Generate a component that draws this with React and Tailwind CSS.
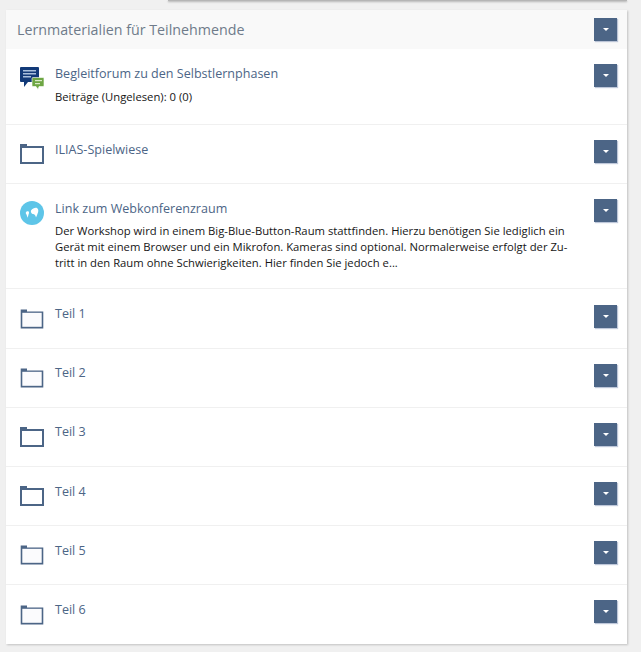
import React from 'react';

const FolderIcon = () => (
  <svg width="24" height="20" viewBox="0 0 24 20" className="block">
    <path d="M0 0h7v2h17v18H0z" fill="#4c6586" />
    <rect x="2" y="4" width="20" height="14" fill="#fff" />
  </svg>
);

// some of the folders are scaled in the original, so their edges come out soft
const SoftFolderIcon = () => (
  <svg width="24" height="20" viewBox="0 0 24 20" className="block">
    <path d="M0.7 0.4h6.3v2h16.3v17H0.7z" fill="#4c6586" />
    <rect x="2.3" y="3.8" width="19.4" height="14" fill="#fbfbfd" />
  </svg>
);

const ForumIcon = () => (
  <svg width="24" height="24" viewBox="0 0 24 24" className="block">
    <path d="M1 0h17a1 1 0 0 1 1 1v14H8l-4 5v-5H1a1 1 0 0 1-1-1V1a1 1 0 0 1 1-1z" fill="#123a78" />
    <rect x="3" y="3" width="13" height="1.5" fill="#a9c0dc" />
    <rect x="3" y="6" width="13" height="1.5" fill="#a9c0dc" />
    <rect x="3" y="9" width="8" height="1.5" fill="#a9c0dc" />
    <path d="M13 10.500h10a1 1 0 0 1 1 1v7a1 1 0 0 1-1 1h-4l-1 3-2-3h-3a1 1 0 0 1-1-1v-7a1 1 0 0 1 1-1z" fill="#6ea644" stroke="#fff" strokeWidth="0.6" />
    <rect x="15" y="13" width="7" height="1.2" fill="#d9eac8" />
    <rect x="15" y="16" width="5" height="1.2" fill="#d9eac8" />
  </svg>
);

const WebIcon = () => (
  <svg width="24" height="24" viewBox="0 0 24 24" className="block">
    <circle cx="12" cy="12" r="12" fill="#5ec5e8" />
    <path d="M11 9.500C12.500 7.500 15 6.500 17 7c1.500 1 1.500 3 1 4.500-.5 1-1 3-2 5-.5-2-1.500-3.500-3-3.500-1.500 0-2.500-2-2-3.500z" fill="#fff" />
    <path d="M5.800 11.500c.7-1.500 2.200-1.500 3-.8.500 1.300 0 2-.3 2.800-.3 1.200-.4 2-.8 3.200-.4-1.300-1-2.200-1.200-3.200-.6-.6-.9-1.300-.7-2z" fill="#fff" />
  </svg>
);

const DropButton = () => (
  <button className="w-[23px] h-[23px] bg-[#4c6586] flex items-center justify-center shadow-[1px_1px_1px_rgba(110,130,170,0.45)] shrink-0">
    <span className="block w-0 h-0 border-x-[3px] border-x-transparent border-t-[3px] border-t-white" />
  </button>
);

const Row = ({ icon, title, children, iconTop, titleTop = 'mt-[1px]', height }) => (
  <div className={`flex items-start border-b border-[#f0f0f0] pl-[14px] pr-[10px] pt-[15px] ${height}`}>
    <div className={`w-[24px] shrink-0 ${iconTop}`}>{icon}</div>
    <div className="ml-[11px] flex-1 min-w-0 pr-[24px]">
      <h4 className={`text-[12.55px] leading-[18px] text-[#4c6586] ${titleTop}`}>{title}</h4>
      {children}
    </div>
    <DropButton />
  </div>
);

const parts = [
  { name: 'Teil 1', soft: true },
  { name: 'Teil 2', soft: true },
  { name: 'Teil 3', soft: false },
  { name: 'Teil 4', soft: false },
  { name: 'Teil 5', soft: true },
  { name: 'Teil 6', soft: true },
];

export default function App() {
  return (
    <div className="min-h-[652px] bg-[#f0f0f0] pt-[10px] pl-[6px] pr-[14px] font-['Open_Sans',sans-serif] relative overflow-hidden">
      <div className="absolute top-0 left-[168px] right-[14px] h-[1px] bg-[#b5b5b5] shadow-[0_1px_2px_rgba(0,0,0,0.35)]" />
      <div className="bg-white shadow-[1px_1px_2px_rgba(0,0,0,0.2)]">
        <div className="h-[39px] bg-[#f9f9f9] flex items-center justify-between pl-[11px] pr-[10px]">
          <h3 className="text-[14.25px] text-[#6f7b8a]">Lernmaterialien für Teilnehmende</h3>
          <DropButton />
        </div>
        <Row icon={<ForumIcon />} iconTop="mt-[3px]" title="Begleitforum zu den Selbstlernphasen" height="h-[76px]">
          <p className="text-[11.27px] leading-[16px] text-[#161616] mt-[6px]">Beiträge (Ungelesen): 0 (0)</p>
        </Row>
        <Row icon={<FolderIcon />} iconTop="mt-[4px]" title="ILIAS-Spielwiese" height="h-[59px]" />
        <Row icon={<WebIcon />} iconTop="mt-[2px]" title="Link zum Webkonferenzraum" height="h-[105px]">
          <p className="text-[11.27px] leading-[16px] text-[#161616] mt-[5px]">
            Der Workshop wird in einem Big-Blue-Button-Raum stattfinden. Hierzu benötigen Sie lediglich ein Gerät mit einem Browser und ein Mikrofon. Kameras sind optional. Normalerweise erfolgt der Zu-tritt in den Raum ohne Schwierigkeiten. Hier finden Sie jedoch e...
          </p>
        </Row>
        <div className="pt-[0.9px]">
          {parts.map((part, i) => (
            <Row
              key={part.name}
              icon={part.soft ? <SoftFolderIcon /> : <FolderIcon />}
              iconTop="mt-[4.2px]"
              titleTop="mt-[0.35px]"
              title={part.name}
              height={i === parts.length - 1 ? 'h-[59.1px] border-b-0' : 'h-[59.1px]'}
            />
          ))}
        </div>
      </div>
    </div>
  );
}
